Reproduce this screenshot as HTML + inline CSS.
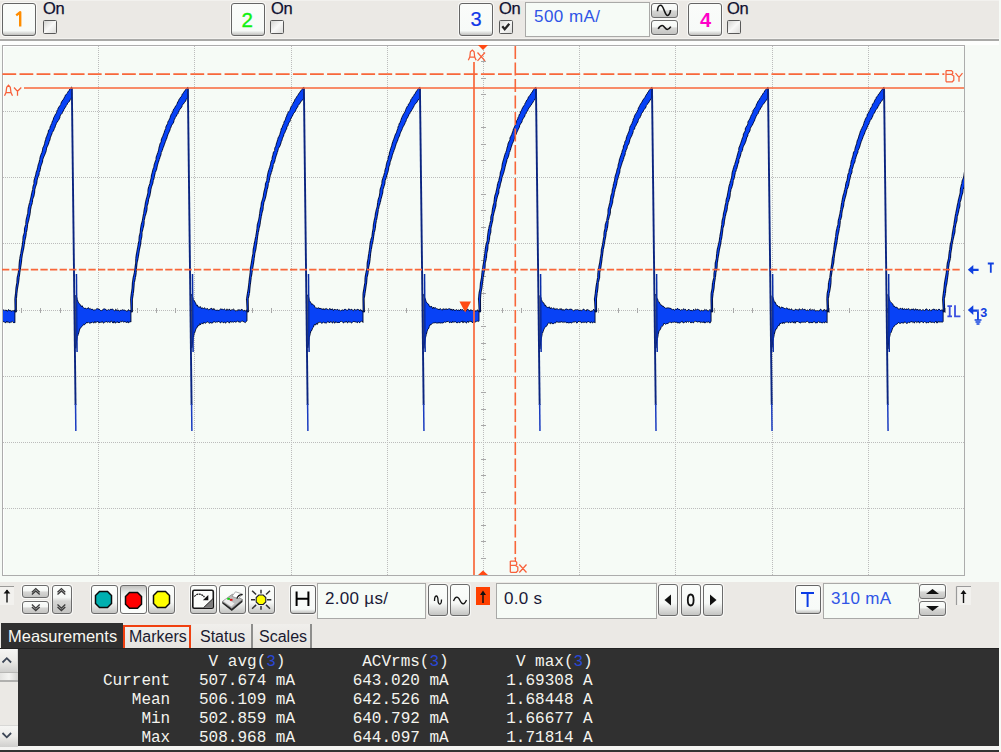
<!DOCTYPE html>
<html><head><meta charset="utf-8">
<style>
*{box-sizing:border-box}
html,body{margin:0;padding:0;width:1001px;height:752px;overflow:hidden;background:#f6faf6;font-family:"Liberation Sans",sans-serif}
.a{position:absolute}
.tb{position:absolute;left:0;width:999px;background:#ebe9e5}
.btn{position:absolute;border:1.8px solid #656565;border-radius:3px;background:linear-gradient(#fafcfa,#f7faf8 86%,#c0c0be);box-shadow:0 0 0 1px #f8f8f6}
.btn2{position:absolute;border:1.9px solid #6c6c6c;border-radius:3px;background:linear-gradient(#fbfdfb,#f5f7f5 42%,#d6d6d4 56%,#c4c4c2);box-shadow:0 0 0 1px #f8f8f6}
.btn3{position:absolute;border:1.9px solid #6c6c6c;border-radius:3px;background:linear-gradient(#fbfdfb,#f7f9f7 60%,#c4c4c2);box-shadow:0 0 0 1px #f8f8f6}
.on{position:absolute;font-size:16.5px;line-height:14.5px;color:#101030;letter-spacing:-0.3px;-webkit-text-stroke:0.25px #101030}
.cb{position:absolute;width:14px;height:14px;border:1.6px solid #585858;border-radius:1.5px;background:linear-gradient(135deg,#d2d2d0,#f8f8f7 50%,#dcdcda)}
.inp{position:absolute;border:1.5px solid #a9a9a7;background:#f6fbf6;font-size:17px;white-space:pre;line-height:20px}
.tab{position:absolute;top:624px;height:24px;background:linear-gradient(#f0efec,#e6e4df);font-size:16px;line-height:25px;color:#1a1a30;border-right:2px solid #8e8e8c}
.meas{position:absolute;left:103px;top:652.5px;font-family:"Liberation Mono",monospace;font-size:16px;line-height:19px;color:#f4f4ee;white-space:pre}
.b3{color:#2a48d8}
</style></head><body>
<!-- top toolbar -->
<div class="tb" style="top:0;height:39px"></div>
<div class="a" style="left:0;top:0;width:999px;height:1px;background:#f2f1ee"></div>
<div class="a" style="left:0;top:39px;width:999px;height:2px;background:#a9a9a7"></div>
<div class="a" style="left:0;top:38px;width:999px;height:1px;background:#f3f2ef"></div>
<div class="a" style="left:0;top:41px;width:999px;height:4px;background:#fdfefd"></div>

<div class="btn" style="left:2px;top:3px;width:34px;height:33px"></div>
<div class="on" style="left:43px;top:1px">On</div>
<div class="cb" style="left:43px;top:20px"></div>

<div class="btn" style="left:231px;top:3px;width:34px;height:33px"></div>
<div class="on" style="left:271px;top:1px">On</div>
<div class="cb" style="left:270px;top:20px"></div>

<div class="btn" style="left:459px;top:3px;width:34px;height:33px"></div>
<div class="on" style="left:499px;top:1px">On</div>
<div class="cb" style="left:499px;top:20px"></div>
<div class="inp" style="left:525px;top:2px;width:125px;height:35px;color:#2f55e6;padding:3.5px 0 0 8px;letter-spacing:0.45px">500 mA/</div>
<div class="btn2" style="left:651px;top:3px;width:27px;height:15px"></div>
<div class="btn2" style="left:651px;top:20px;width:27px;height:15px"></div>

<div class="btn" style="left:688px;top:3px;width:34px;height:33px"></div>
<div class="on" style="left:727px;top:1px">On</div>
<div class="cb" style="left:727px;top:20px"></div>

<!-- plot -->
<svg class="a" style="left:0;top:0" width="1001" height="752">
  <rect x="2.5" y="45.5" width="962" height="530" fill="#f6fbf6" stroke="#acacac" stroke-width="1"/>
  <path d="M3.5 46.5V575M3 46.5H964" stroke="#ffffff" stroke-width="1"/>
  <path d="M98.5 46V575M194.5 46V575M291.5 46V575M387.5 46V575M483.5 46V575M579.5 46V575M675.5 46V575M772.5 46V575M868.5 46V575M3 111.5H964M3 177.5H964M3 243.5H964M3 310.5H964M3 376.5H964M3 442.5H964M3 508.5H964" stroke="#bcbcbc" stroke-width="1" stroke-dasharray="1 1" fill="none"/>
  <path d="M21.5 308V313M40.5 308V313M60.5 308V313M79.5 308V313M117.5 308V313M137.5 308V313M156.5 308V313M175.5 308V313M214.5 308V313M233.5 308V313M252.5 308V313M271.5 308V313M310.5 308V313M329.5 308V313M348.5 308V313M368.5 308V313M406.5 308V313M425.5 308V313M445.5 308V313M464.5 308V313M502.5 308V313M521.5 308V313M541.5 308V313M560.5 308V313M598.5 308V313M618.5 308V313M637.5 308V313M656.5 308V313M695.5 308V313M714.5 308V313M733.5 308V313M752.5 308V313M791.5 308V313M810.5 308V313M829.5 308V313M849.5 308V313M887.5 308V313M906.5 308V313M926.5 308V313M945.5 308V313M481 61.5H486M481 78.5H486M481 94.5H486M481 127.5H486M481 144.5H486M481 160.5H486M481 194.5H486M481 210.5H486M481 227.5H486M481 260.5H486M481 276.5H486M481 293.5H486M481 326.5H486M481 343.5H486M481 359.5H486M481 392.5H486M481 409.5H486M481 425.5H486M481 459.5H486M481 475.5H486M481 492.5H486M481 525.5H486M481 541.5H486M481 558.5H486" stroke="#a8a8a8" stroke-width="1" fill="none"/>
  <defs><clipPath id="pc"><rect x="3" y="46" width="961" height="529"/></clipPath></defs>
  <g clip-path="url(#pc)">
  <g fill="#0842f6" stroke="#000a30" stroke-width="0.9" stroke-linejoin="round" shape-rendering="crispEdges">
    <path d="M-100.98 312L-101.61 298.9L-100.84 293.42L-99.89 288.06L-99.51 282.82L-98.79 277.7L-98.04 272.69L-97.63 267.79L-96.71 263L-95.94 258.32L-95.14 253.74L-94.94 249.26L-94.11 244.88L-93.57 240.6L-92.38 236.41L-91.78 232.32L-91.56 228.32L-90.22 224.4L-89.55 220.58L-89.09 216.83L-88.44 213.17L-88.08 209.6L-87.5 206.1L-86.47 202.68L-86.12 199.33L-85.36 196.06L-84.65 192.86L-84.13 189.73L-83.15 186.68L-82.5 183.69L-81.55 180.76L-81.11 177.9L-80.35 175.11L-79.79 172.37L-79.01 169.7L-78.49 167.09L-77.95 164.53L-76.78 162.03L-76.12 159.59L-75.57 157.2L-75 154.86L-74.61 152.58L-74.01 150.35L-73.32 148.16L-72.81 146.03L-71.67 143.94L-71.27 141.9L-70.3 139.9L-69.97 137.95L-68.92 136.04L-68.34 134.17L-68.28 132.35L-67.48 130.56L-66.34 128.82L-66 127.11L-65 125.44L-64.76 123.81L-64.34 122.21L-63.3 120.65L-62.55 119.13L-62.26 117.64L-61.75 116.18L-60.93 114.75L-59.85 113.36L-59.35 112L-59.16 110.66L-58.43 109.36L-57.89 108.08L-57.28 106.84L-56.12 105.62L-55.92 104.43L-55.02 103.26L-54.46 102.12L-54 101.01L-52.99 99.92L-52.78 98.85L-51.78 97.81L-51.52 96.79L-50.68 95.8L-50.19 94.82L-49.52 93.87L-48.4 92.94L-47.89 92.03L-47.61 91.14L-46.58 90.27L-46.42 89.42L-45.67 88.58L-44.72 87.77L-44.28 86.97L-44.28 97.81L-44.88 98.85L-45.82 99.92L-46.48 101.01L-47.67 102.12L-47.78 103.26L-48.73 104.43L-49.34 105.62L-50.73 106.84L-51.48 108.08L-52.16 109.36L-52.61 110.66L-53.3 112L-54.08 113.36L-54.61 114.75L-55.43 116.18L-56.56 117.64L-57.47 119.13L-57.92 120.65L-58.81 122.21L-59.7 123.81L-60.54 125.44L-61.02 127.11L-61.89 128.82L-62.82 130.56L-63.44 132.35L-63.68 134.17L-64.88 136.04L-65.39 137.95L-65.97 139.9L-66.92 141.9L-67.9 143.94L-68.75 146.03L-69.04 148.16L-70.16 150.35L-70.82 152.58L-71.35 154.86L-71.93 157.2L-73.06 159.59L-73.49 162.03L-74.55 164.53L-74.78 167.09L-76.16 169.7L-76.85 172.37L-77.36 175.11L-77.97 177.9L-78.51 180.76L-79.19 183.69L-80.45 186.68L-80.66 189.73L-81.52 192.86L-82.64 196.06L-83.32 199.33L-83.65 202.68L-84.31 206.1L-85.56 209.6L-86.27 213.17L-86.51 216.83L-87.43 220.58L-88.22 224.4L-88.6 228.32L-89.68 232.32L-90.45 236.41L-91.01 240.6L-91.97 244.88L-92.45 249.26L-93.51 253.74L-94.23 258.32L-94.78 263L-95.47 267.79L-95.87 272.69L-96.93 277.7L-97.67 282.82L-97.83 288.06L-99.16 293.42L-99.48 298.9L-99.58 312ZM-40.28 294.47L-39.48 296.52L-38.68 300.01L-37.88 301.73L-37.08 303.27L-36.28 303.5L-35.48 305.61L-34.68 305.38L-33.88 306.97L-33.08 307L-32.28 307.36L-31.48 306.67L-30.68 308.89L-29.88 308.59L-29.08 308.81L-28.28 308.37L-27.48 307.77L-26.68 307.79L-25.88 308.84L-25.08 309.39L-24.28 309.29L-23.48 308.61L-22.68 308.77L-21.88 308.61L-21.08 310.14L-20.28 309.21L-19.48 309.01L-18.68 308.77L-17.88 310.08L-17.08 310.27L-16.28 309.68L-15.48 308.77L-14.68 310.27L-13.88 310.03L-13.08 309.15L-12.28 309.54L-11.48 309.07L-10.68 309.96L-9.88 309.33L-9.08 310.75L-8.28 308.87L-7.48 310.57L-6.68 310.25L-5.88 309.43L-5.08 308.85L-4.28 309.79L-3.48 310.6L-2.68 309.17L-1.88 310.22L-1.08 310.25L-0.28 310.64L0.52 310.41L1.32 309.99L2.12 309.04L2.92 310.54L3.72 309.63L4.52 310.55L5.32 310.4L6.12 309.96L6.92 311.06L7.72 311.14L8.52 309.47L9.32 310.54L10.12 310.04L10.92 311.12L11.72 311.28L12.52 310.68L13.32 310.85L14.12 310.71L14.92 309.83L14.92 322.8L14.12 322.42L13.32 322.64L12.52 321.36L11.72 321.91L10.92 322.62L10.12 322.15L9.32 322.88L8.52 321.93L7.72 322.5L6.92 321.17L6.12 322.66L5.32 322.6L4.52 322.11L3.72 321.75L2.92 321.41L2.12 322.04L1.32 321.43L0.52 321.48L-0.28 323.08L-1.08 322.45L-1.88 322.02L-2.68 321.19L-3.48 321.6L-4.28 321.16L-5.08 321.41L-5.88 322.79L-6.68 322.34L-7.48 321.23L-8.28 321.22L-9.08 322.12L-9.88 322.94L-10.68 322.22L-11.48 322.06L-12.28 321.78L-13.08 321.57L-13.88 323.21L-14.68 323.01L-15.48 322.28L-16.28 321.91L-17.08 322.07L-17.88 323.19L-18.68 322.19L-19.48 322.7L-20.28 323.19L-21.08 322.72L-21.88 321.71L-22.68 322.81L-23.48 321.44L-24.28 323.39L-25.08 322.54L-25.88 322.04L-26.68 322.9L-27.48 323.3L-28.28 323.61L-29.08 323.22L-29.88 323.02L-30.68 324.3L-31.48 324.13L-32.28 324.5L-33.08 324.58L-33.88 325.71L-34.68 327.12L-35.48 328.53L-36.28 329.75L-37.08 332.34L-37.88 334.63L-38.68 338.63L-39.48 342.55L-40.28 349.6ZM15.05 312L14.79 298.9L15.48 293.42L15.87 288.06L16.75 282.82L17.11 277.7L18.22 272.69L18.87 267.79L19.2 263L19.71 258.32L20.65 253.74L21.41 249.26L22.25 244.88L22.74 240.6L23.1 236.41L24.33 232.32L24.49 228.32L25.69 224.4L25.93 220.58L26.72 216.83L27.71 213.17L27.94 209.6L28.62 206.1L29.55 202.68L30.37 199.33L31.13 196.06L31.69 192.86L32.55 189.73L32.9 186.68L33.89 183.69L33.95 180.76L34.72 177.9L35.6 175.11L36.1 172.37L37.07 169.7L37.67 167.09L38.25 164.53L39.14 162.03L39.61 159.59L40.09 157.2L40.8 154.86L41.79 152.58L42.48 150.35L42.66 148.16L43.77 146.03L44.5 143.94L44.85 141.9L45.54 139.9L45.93 137.95L46.82 136.04L47.45 134.17L48.17 132.35L48.42 130.56L49.73 128.82L50.06 127.11L50.63 125.44L51.56 123.81L52.04 122.21L52.63 120.65L53.42 119.13L53.63 117.64L54.6 116.18L55.16 114.75L56.18 113.36L56.8 112L56.98 110.66L57.76 109.36L58.16 108.08L59.01 106.84L59.92 105.62L60.62 104.43L60.96 103.26L61.48 102.12L62.03 101.01L62.96 99.92L63.81 98.85L63.89 97.81L64.97 96.79L65.08 95.8L65.83 94.82L66.48 93.87L67.43 92.94L67.8 92.03L68.46 91.14L69.27 90.27L69.53 89.42L70.6 88.58L70.8 87.77L71.75 86.97L71.75 97.81L70.96 98.85L70 99.92L69.7 101.01L68.83 102.12L67.59 103.26L67.23 104.43L66.35 105.62L65.65 106.84L64.85 108.08L64 109.36L63.54 110.66L62.57 112L62.16 113.36L60.78 114.75L60.04 116.18L59.87 117.64L59.16 119.13L58.3 120.65L57.1 122.21L56.33 123.81L55.56 125.44L55.1 127.11L54.31 128.82L53.59 130.56L52.48 132.35L51.78 134.17L51.01 136.04L50.34 137.95L49.94 139.9L49.07 141.9L48.5 143.94L47.58 146.03L46.57 148.16L46.42 150.35L45.64 152.58L44.74 154.86L43.67 157.2L42.8 159.59L42.53 162.03L41.59 164.53L40.66 167.09L40.39 169.7L39.4 172.37L38.95 175.11L37.71 177.9L37.09 180.76L36.68 183.69L35.61 186.68L34.81 189.73L34.61 192.86L33.96 196.06L32.69 199.33L32.45 202.68L31.3 206.1L30.58 209.6L30.27 213.17L29.48 216.83L28.71 220.58L27.64 224.4L27.35 228.32L26.46 232.32L25.92 236.41L24.97 240.6L24.34 244.88L23.62 249.26L22.6 253.74L21.86 258.32L21.41 263L20.62 267.79L19.88 272.69L19.22 277.7L18.58 282.82L17.64 288.06L16.98 293.42L16.46 298.9L16.45 312ZM75.75 295.35L76.55 296.77L77.35 299.54L78.15 302.06L78.95 303.08L79.75 304.09L80.55 304.98L81.35 306.57L82.15 305.7L82.95 307.26L83.75 307.85L84.55 308.38L85.35 308.26L86.15 308.67L86.95 308.79L87.75 308.17L88.55 307.62L89.35 309.06L90.15 308.32L90.95 309.32L91.75 309.39L92.55 309.19L93.35 310.23L94.15 309.66L94.95 310.29L95.75 309.57L96.55 308.86L97.35 308.46L98.15 309.18L98.95 308.95L99.75 309.61L100.55 310.51L101.35 310.6L102.15 310.24L102.95 309.82L103.75 308.69L104.55 308.95L105.35 309L106.15 309.95L106.95 310.68L107.75 309.82L108.55 309.51L109.35 310.14L110.15 309.38L110.95 309.43L111.75 309.35L112.55 309.18L113.35 309.7L114.15 310.47L114.95 311L115.75 309.1L116.55 309.87L117.35 311.04L118.15 310.12L118.95 310.56L119.75 311.12L120.55 310.35L121.35 310.42L122.15 309.56L122.95 310.26L123.75 310.11L124.55 310.16L125.35 310.45L126.15 310.88L126.95 311.36L127.75 310.83L128.55 309.55L129.35 310.99L130.15 310.12L130.95 310.82L130.95 322.09L130.15 321.48L129.35 322.24L128.55 322.81L127.75 321.44L126.95 322.95L126.15 322.07L125.35 321.85L124.55 321.53L123.75 322.39L122.95 321.25L122.15 321.11L121.35 321.97L120.55 321.26L119.75 322.74L118.95 322.02L118.15 323.01L117.35 321.56L116.55 322.06L115.75 322.97L114.95 323.06L114.15 321.19L113.35 322.98L112.55 322.69L111.75 321.2L110.95 321.15L110.15 322.63L109.35 322.32L108.55 321.75L107.75 322.41L106.95 322.05L106.15 321.3L105.35 322.22L104.55 322.18L103.75 323.15L102.95 322.8L102.15 321.38L101.35 322.57L100.55 322.43L99.75 322.32L98.95 323.16L98.15 321.48L97.35 321.7L96.55 322.14L95.75 322.87L94.95 321.38L94.15 322.96L93.35 322.73L92.55 322.23L91.75 322.65L90.95 322.21L90.15 323.54L89.35 322.94L88.55 322.47L87.75 322.83L86.95 322.15L86.15 323.05L85.35 324.07L84.55 324.64L83.75 324.07L82.95 325.41L82.15 326.42L81.35 327.15L80.55 327.76L79.75 329.16L78.95 332.22L78.15 334.84L77.35 336.77L76.55 341.75L75.75 348.35ZM131.08 312L130.54 298.9L131.27 293.42L132.05 288.06L132.35 282.82L133.09 277.7L134.29 272.69L134.94 267.79L135.61 263L135.71 258.32L136.41 253.74L137.25 249.26L138.04 244.88L138.86 240.6L139.18 236.41L140.17 232.32L140.53 228.32L141.22 224.4L142.31 220.58L142.9 216.83L143.63 213.17L144.13 209.6L144.88 206.1L145.37 202.68L146.14 199.33L147.09 196.06L147.83 192.86L147.97 189.73L148.67 186.68L149.82 183.69L150.36 180.76L151.13 177.9L151.41 175.11L152.22 172.37L152.77 169.7L153.82 167.09L154.18 164.53L155.04 162.03L155.94 159.59L156.13 157.2L156.95 154.86L157.75 152.58L158.53 150.35L158.84 148.16L159.46 146.03L159.92 143.94L161.12 141.9L161.22 139.9L161.88 137.95L162.87 136.04L163.47 134.17L164.26 132.35L164.64 130.56L165.62 128.82L165.78 127.11L166.53 125.44L167.49 123.81L167.73 122.21L168.53 120.65L169.47 119.13L170.09 117.64L170.45 116.18L171 114.75L171.79 113.36L172.69 112L173.08 110.66L173.54 109.36L174.6 108.08L175.14 106.84L176.02 105.62L176.67 104.43L177.29 103.26L177.6 102.12L178.49 101.01L178.77 99.92L179.41 98.85L180.11 97.81L181.11 96.79L181.72 95.8L181.89 94.82L182.6 93.87L183.24 92.94L183.86 92.03L184.51 91.14L185.14 90.27L185.63 89.42L186.51 88.58L187.3 87.77L187.78 86.97L187.78 97.81L186.74 98.85L185.93 99.92L185.77 101.01L184.78 102.12L183.93 103.26L182.89 104.43L182.21 105.62L181.86 106.84L181.01 108.08L179.88 109.36L179.25 110.66L178.32 112L178.2 113.36L176.97 114.75L176.3 116.18L175.39 117.64L174.61 119.13L174 120.65L173.68 122.21L172.75 123.81L171.58 125.44L171.03 127.11L170.28 128.82L169.79 130.56L168.98 132.35L168.1 134.17L167.43 136.04L166.91 137.95L166.12 139.9L165.33 141.9L164.57 143.94L163.86 146.03L162.98 148.16L162.35 150.35L161.32 152.58L160.93 154.86L160.05 157.2L159.32 159.59L158.45 162.03L157.69 164.53L157.08 167.09L156.55 169.7L155.37 172.37L154.68 175.11L154.2 177.9L153.3 180.76L152.74 183.69L151.63 186.68L150.92 189.73L150.47 192.86L149.81 196.06L148.66 199.33L148.28 202.68L147.17 206.1L147.02 209.6L146.18 213.17L145 216.83L144.28 220.58L144.06 224.4L143.17 228.32L142.11 232.32L141.91 236.41L141.09 240.6L140.6 244.88L139.6 249.26L138.87 253.74L138.14 258.32L137.08 263L136.56 267.79L136.27 272.69L135.48 277.7L134.36 282.82L133.93 288.06L133.42 293.42L132.51 298.9L132.48 312ZM191.78 294.19L192.58 296.86L193.38 299.71L194.18 300.57L194.98 301.96L195.78 303.42L196.58 305.44L197.38 305.06L198.18 307.08L198.98 306.84L199.78 307.15L200.58 306.61L201.38 308.49L202.18 308.17L202.98 307.85L203.78 308.83L204.58 307.62L205.38 308.5L206.18 309.33L206.98 308.25L207.78 308.68L208.58 309.9L209.38 309.47L210.18 308.75L210.98 308.55L211.78 308.28L212.58 310.1L213.38 308.53L214.18 309.9L214.98 309.43L215.78 310.46L216.58 310.28L217.38 310.17L218.18 310.46L218.98 310.3L219.78 309.73L220.58 308.95L221.38 309.3L222.18 308.83L222.98 309.67L223.78 309.47L224.58 308.96L225.38 309.73L226.18 310.53L226.98 308.83L227.78 310.32L228.58 310.04L229.38 308.9L230.18 310.58L230.98 310.22L231.78 309.74L232.58 309.6L233.38 309.82L234.18 309.56L234.98 310.58L235.78 311.05L236.58 310.61L237.38 310.85L238.18 309.43L238.98 310.58L239.78 309.56L240.58 310.96L241.38 309.41L242.18 309.58L242.98 310.12L243.78 311.23L244.58 310.39L245.38 310.95L246.18 310.17L246.98 310.25L246.98 320.94L246.18 321.61L245.38 322.65L244.58 322.29L243.78 321.84L242.98 321.1L242.18 321.22L241.38 321.44L240.58 322.22L239.78 321.83L238.98 322.48L238.18 321.2L237.38 321.2L236.58 321.71L235.78 322.21L234.98 321.73L234.18 321.46L233.38 322.45L232.58 321.77L231.78 322.2L230.98 321.69L230.18 321.52L229.38 323.18L228.58 322.07L227.78 321.61L226.98 321.91L226.18 322.5L225.38 323.17L224.58 321.98L223.78 322.6L222.98 322.67L222.18 321.82L221.38 321.84L220.58 322.94L219.78 322.3L218.98 321.65L218.18 321.41L217.38 322.11L216.58 321.88L215.78 322.48L214.98 322.25L214.18 321.48L213.38 321.85L212.58 323.03L211.78 323.04L210.98 322.95L210.18 322.48L209.38 323.47L208.58 322.5L207.78 322L206.98 321.83L206.18 322.83L205.38 323.31L204.58 322.72L203.78 322.35L202.98 324.08L202.18 323.28L201.38 323.26L200.58 324.78L199.78 323.68L198.98 325.79L198.18 325.23L197.38 327.32L196.58 327.7L195.78 329.46L194.98 332L194.18 333.75L193.38 337.21L192.58 342.91L191.78 347.96ZM247.11 312L246.44 298.9L247.35 293.42L248.24 288.06L248.8 282.82L249.41 277.7L250.06 272.69L250.34 267.79L251.25 263L251.95 258.32L252.85 253.74L253.16 249.26L254.04 244.88L254.81 240.6L255.69 236.41L256.4 232.32L256.93 228.32L257.3 224.4L258.4 220.58L259.18 216.83L259.61 213.17L260.15 209.6L260.93 206.1L261.35 202.68L262.43 199.33L263.29 196.06L263.63 192.86L264.44 189.73L265.2 186.68L265.42 183.69L266.61 180.76L267.06 177.9L267.43 175.11L268.01 172.37L268.79 169.7L269.69 167.09L270.44 164.53L270.84 162.03L271.92 159.59L272.19 157.2L272.92 154.86L273.34 152.58L274.6 150.35L274.67 148.16L275.86 146.03L276.27 143.94L276.93 141.9L277.59 139.9L278.04 137.95L279.14 136.04L279.85 134.17L280.38 132.35L280.88 130.56L281.2 128.82L282.34 127.11L282.61 125.44L283.68 123.81L283.87 122.21L284.75 120.65L285.58 119.13L285.77 117.64L286.67 116.18L286.98 114.75L287.59 113.36L288.34 112L289.54 110.66L290.15 109.36L290.59 108.08L290.99 106.84L291.88 105.62L292.56 104.43L292.95 103.26L293.73 102.12L294.52 101.01L294.6 99.92L295.36 98.85L296.18 97.81L296.59 96.79L297.39 95.8L298.15 94.82L298.5 93.87L299.37 92.94L299.82 92.03L300.66 91.14L301.13 90.27L301.97 89.42L302.17 88.58L303.24 87.77L303.81 86.97L303.81 97.81L303.38 98.85L302.59 99.92L301.51 101.01L300.62 102.12L300.27 103.26L298.9 104.43L298.14 105.62L297.76 106.84L296.84 108.08L296.11 109.36L295.64 110.66L294.94 112L293.59 113.36L293.02 114.75L292.25 116.18L291.45 117.64L290.53 119.13L290.44 120.65L289.39 122.21L288.35 123.81L288.07 125.44L286.83 127.11L286.64 128.82L285.66 130.56L285.03 132.35L283.92 134.17L283.58 136.04L282.56 137.95L282.13 139.9L281.24 141.9L280.71 143.94L279.93 146.03L278.6 148.16L277.97 150.35L277.34 152.58L276.54 154.86L275.75 157.2L275.21 159.59L274.59 162.03L273.41 164.53L272.91 167.09L272.25 169.7L271.48 172.37L270.52 175.11L269.75 177.9L269.38 180.76L268.45 183.69L268.03 186.68L267.19 189.73L266.56 192.86L265.95 196.06L265.1 199.33L263.91 202.68L263.37 206.1L263.05 209.6L262 213.17L261.34 216.83L260.62 220.58L260.17 224.4L259.21 228.32L258.4 232.32L257.67 236.41L257.26 240.6L256.54 244.88L255.93 249.26L254.86 253.74L254.34 258.32L253.63 263L252.87 267.79L252.12 272.69L251.26 277.7L250.6 282.82L249.98 288.06L249.53 293.42L248.26 298.9L248.51 312ZM307.81 294.79L308.61 296.98L309.41 300.34L310.21 301.95L311.01 302.59L311.81 304.61L312.61 304.15L313.41 304.91L314.21 305.26L315.01 307.22L315.81 308.03L316.61 308L317.41 308.27L318.21 307.99L319.01 307.74L319.81 308.94L320.61 307.98L321.41 309.12L322.21 308.61L323.01 309.78L323.81 308.48L324.61 310.02L325.41 308.71L326.21 308.38L327.01 309.16L327.81 309.39L328.61 309.58L329.41 308.88L330.21 308.57L331.01 310.01L331.81 309.04L332.61 308.87L333.41 310.59L334.21 309.51L335.01 309.37L335.81 309.64L336.61 309.78L337.41 309.4L338.21 310.31L339.01 309.75L339.81 310.15L340.61 310.74L341.41 310.4L342.21 310.06L343.01 309.73L343.81 310.48L344.61 309.35L345.41 309.34L346.21 309.95L347.01 310.18L347.81 310.15L348.61 309.35L349.41 309.03L350.21 309.93L351.01 309.59L351.81 309.22L352.61 310.28L353.41 310.77L354.21 309.44L355.01 309.24L355.81 310.48L356.61 309.76L357.41 309.41L358.21 309.61L359.01 309.61L359.81 311.04L360.61 309.44L361.41 310.1L362.21 311.4L363.01 310.41L363.01 322.5L362.21 321L361.41 321.38L360.61 321.79L359.81 322.59L359.01 322.4L358.21 321.49L357.41 322.69L356.61 322.21L355.81 322.09L355.01 321.65L354.21 321.65L353.41 321.51L352.61 322.16L351.81 322.93L351.01 322.71L350.21 321.97L349.41 322.09L348.61 321.38L347.81 322.9L347.01 322.58L346.21 321.16L345.41 322.31L344.61 322.13L343.81 322.77L343.01 322.74L342.21 321.62L341.41 321.49L340.61 321.51L339.81 322.25L339.01 322.94L338.21 322.26L337.41 322.57L336.61 322.55L335.81 321.58L335.01 323.16L334.21 322.8L333.41 321.3L332.61 323.12L331.81 322.4L331.01 321.78L330.21 321.87L329.41 322.97L328.61 321.9L327.81 321.41L327.01 322.45L326.21 323.42L325.41 322.73L324.61 322.82L323.81 322.09L323.01 322.74L322.21 322.95L321.41 323.29L320.61 322.22L319.81 322.26L319.01 322.65L318.21 322.37L317.41 324.43L316.61 323.07L315.81 325.05L315.01 324.44L314.21 324.73L313.41 327.31L312.61 328.03L311.81 330.4L311.01 330.77L310.21 333.9L309.41 337.15L308.61 343.34L307.81 347.93ZM363.14 312L362.88 298.9L362.99 293.42L363.9 288.06L364.8 282.82L365 277.7L365.84 272.69L366.98 267.79L367.15 263L368.02 258.32L368.64 253.74L369.41 249.26L369.85 244.88L370.51 240.6L371.87 236.41L372.39 232.32L373.05 228.32L373.38 224.4L374.07 220.58L374.96 216.83L375.42 213.17L376.25 209.6L377.26 206.1L377.54 202.68L378.19 199.33L379.32 196.06L379.73 192.86L380 189.73L380.93 186.68L381.77 183.69L382.02 180.76L382.89 177.9L383.8 175.11L384.59 172.37L385.06 169.7L385.94 167.09L386.3 164.53L386.92 162.03L387.89 159.59L388.23 157.2L389.17 154.86L389.44 152.58L390.19 150.35L390.73 148.16L391.64 146.03L392.03 143.94L392.71 141.9L393.38 139.9L394.21 137.95L394.75 136.04L395.5 134.17L396.53 132.35L396.96 130.56L397.74 128.82L397.93 127.11L398.71 125.44L399.14 123.81L400.22 122.21L400.63 120.65L401.22 119.13L401.68 117.64L402.44 116.18L403.14 114.75L403.87 113.36L404.89 112L405.38 110.66L405.71 109.36L406.41 108.08L406.91 106.84L408.09 105.62L408.33 104.43L409.25 103.26L409.86 102.12L410.62 101.01L410.63 99.92L411.48 98.85L412.15 97.81L412.58 96.79L413.77 95.8L414.01 94.82L414.95 93.87L415.4 92.94L415.71 92.03L416.57 91.14L417.09 90.27L417.58 89.42L418.28 88.58L419.22 87.77L419.84 86.97L419.84 97.81L419.2 98.85L418.14 99.92L417.59 101.01L417.06 102.12L415.91 103.26L414.92 104.43L414.32 105.62L413.61 106.84L412.95 108.08L412.27 109.36L411.44 110.66L410.38 112L409.86 113.36L408.87 114.75L408.32 116.18L407.58 117.64L406.57 119.13L406.29 120.65L405.43 122.21L404.79 123.81L403.95 125.44L402.9 127.11L402.34 128.82L401.53 130.56L400.61 132.35L399.96 134.17L399.51 136.04L398.42 137.95L397.89 139.9L397.09 141.9L396.17 143.94L395.52 146.03L394.93 148.16L394.07 150.35L393.36 152.58L392.4 154.86L391.89 157.2L391.18 159.59L390.2 162.03L389.84 164.53L388.83 167.09L388.54 169.7L387.86 172.37L386.93 175.11L386.21 177.9L385.15 180.76L384.91 183.69L384.01 186.68L383.02 189.73L382.76 192.86L381.92 196.06L381.02 199.33L380.34 202.68L379.19 206.1L378.48 209.6L377.88 213.17L377.25 216.83L376.49 220.58L375.72 224.4L375.45 228.32L374.4 232.32L373.69 236.41L373.19 240.6L372.17 244.88L371.41 249.26L370.65 253.74L370.31 258.32L369.64 263L368.6 267.79L368.21 272.69L367.1 277.7L366.68 282.82L365.89 288.06L365.11 293.42L364.21 298.9L364.54 312ZM423.84 294.19L424.64 297.65L425.44 299.22L426.24 302.16L427.04 302.92L427.84 303.63L428.64 304.3L429.44 306.36L430.24 307.07L431.04 305.98L431.84 306.78L432.64 308.55L433.44 307.21L434.24 308.49L435.04 307.27L435.84 308.27L436.64 308.63L437.44 308.87L438.24 309.01L439.04 309.96L439.84 308.73L440.64 308.73L441.44 309.59L442.24 310.21L443.04 308.57L443.84 309.31L444.64 309.1L445.44 309.93L446.24 308.89L447.04 309.11L447.84 309.53L448.64 308.62L449.44 308.73L450.24 308.78L451.04 310.19L451.84 308.93L452.64 310.44L453.44 309.17L454.24 310.34L455.04 310.19L455.84 310.22L456.64 309.44L457.44 310.53L458.24 309.98L459.04 310.29L459.84 310.58L460.64 309.12L461.44 310.28L462.24 309.29L463.04 310.15L463.84 310.99L464.64 310.41L465.44 310.32L466.24 310.98L467.04 309.14L467.84 309.31L468.64 309.69L469.44 311.2L470.24 309.83L471.04 310.29L471.84 309.96L472.64 310.88L473.44 309.82L474.24 310.54L475.04 311.33L475.84 310.75L476.64 311L477.44 309.71L478.24 311.32L479.04 310.41L479.04 321.16L478.24 321.44L477.44 321.15L476.64 321.24L475.84 322.09L475.04 321.77L474.24 322.56L473.44 321.79L472.64 322.74L471.84 321.63L471.04 322.01L470.24 321.06L469.44 321.26L468.64 322.55L467.84 321.12L467.04 322.53L466.24 323.12L465.44 321.89L464.64 321.94L463.84 321.35L463.04 323.05L462.24 321.12L461.44 321.58L460.64 321.9L459.84 322.8L459.04 322.43L458.24 322.01L457.44 322.88L456.64 322.74L455.84 321.84L455.04 321.69L454.24 322L453.44 322.25L452.64 321.3L451.84 323.02L451.04 322.22L450.24 322.17L449.44 322.71L448.64 321.38L447.84 321.51L447.04 321.63L446.24 321.8L445.44 322.41L444.64 321.9L443.84 322.5L443.04 322.64L442.24 323.09L441.44 322.83L440.64 322.92L439.84 323.31L439.04 322.2L438.24 323.3L437.44 322.94L436.64 323.09L435.84 322.35L435.04 323.14L434.24 322.69L433.44 322.94L432.64 323.1L431.84 323.98L431.04 324.85L430.24 324.59L429.44 326.26L428.64 328.44L427.84 329.18L427.04 331.72L426.24 334.78L425.44 337.95L424.64 343.41L423.84 348.49ZM479.17 312L478.45 298.9L478.93 293.42L480.01 288.06L480.41 282.82L481.44 277.7L481.89 272.69L482.55 267.79L483.42 263L484.03 258.32L484.64 253.74L485.18 249.26L485.88 244.88L487.14 240.6L487.42 236.41L487.94 232.32L488.69 228.32L489.58 224.4L490.62 220.58L490.75 216.83L491.89 213.17L492.3 209.6L492.93 206.1L493.88 202.68L494.26 199.33L494.7 196.06L495.72 192.86L496.46 189.73L497.11 186.68L497.54 183.69L498.67 180.76L499.29 177.9L500.04 175.11L500.32 172.37L501.26 169.7L501.85 167.09L502.13 164.53L502.69 162.03L503.45 159.59L504.08 157.2L504.71 154.86L505.57 152.58L506.5 150.35L506.85 148.16L507.65 146.03L507.95 143.94L508.75 141.9L509.93 139.9L509.92 137.95L510.93 136.04L511.78 134.17L512.42 132.35L513.03 130.56L513.45 128.82L514.38 127.11L515.05 125.44L515.65 123.81L516.45 122.21L516.48 120.65L517.72 119.13L517.98 117.64L518.84 116.18L519.16 114.75L520.27 113.36L520.29 112L521.32 110.66L521.71 109.36L522.46 108.08L523.09 106.84L523.93 105.62L524.67 104.43L525 103.26L525.83 102.12L526.26 101.01L526.84 99.92L527.92 98.85L528.14 97.81L528.61 96.79L529.41 95.8L530.33 94.82L530.59 93.87L531.59 92.94L532.08 92.03L532.8 91.14L533.08 90.27L533.65 89.42L534.31 88.58L535.08 87.77L535.87 86.97L535.87 97.81L534.8 98.85L534.69 99.92L533.58 101.01L533.02 102.12L532.28 103.26L531.59 104.43L530.63 105.62L530 106.84L528.81 108.08L528.23 109.36L527.82 110.66L526.46 112L526.22 113.36L525.13 114.75L524.79 116.18L523.86 117.64L522.8 119.13L522.35 120.65L521.77 122.21L520.65 123.81L519.68 125.44L519.47 127.11L518.49 128.82L517.74 130.56L516.88 132.35L516.26 134.17L515.1 136.04L514.69 137.95L513.98 139.9L513.26 141.9L512.25 143.94L511.62 146.03L510.9 148.16L510.33 150.35L509.44 152.58L508.87 154.86L508.23 157.2L506.99 159.59L506.57 162.03L505.78 164.53L505.14 167.09L504.56 169.7L503.85 172.37L502.92 175.11L501.91 177.9L501.48 180.76L500.56 183.69L500.01 186.68L498.94 189.73L498.8 192.86L497.63 196.06L496.78 199.33L496.15 202.68L495.87 206.1L494.95 209.6L493.95 213.17L493.16 216.83L492.81 220.58L491.88 224.4L491.03 228.32L490.83 232.32L489.74 236.41L489.41 240.6L488.08 244.88L487.82 249.26L486.81 253.74L486.49 258.32L485.3 263L485.12 267.79L484.12 272.69L483.26 277.7L482.61 282.82L481.98 288.06L480.93 293.42L480.52 298.9L480.57 312ZM539.87 295.63L540.67 296.89L541.47 299.41L542.27 302L543.07 302.19L543.87 302.92L544.67 305.37L545.47 305.02L546.27 306.95L547.07 306.85L547.87 307.81L548.67 307.27L549.47 306.88L550.27 308.87L551.07 307.52L551.87 308.26L552.67 308.89L553.47 307.87L554.27 308.27L555.07 309.76L555.87 308.42L556.67 308.98L557.47 308.85L558.27 309.51L559.07 309.5L559.87 308.66L560.67 309.78L561.47 308.63L562.27 310.37L563.07 309.17L563.87 310.54L564.67 310.03L565.47 309.16L566.27 308.85L567.07 309.46L567.87 309.45L568.67 309.68L569.47 309.37L570.27 309.16L571.07 309.29L571.87 309.32L572.67 310.16L573.47 310.72L574.27 310.35L575.07 309.75L575.87 309.71L576.67 309.78L577.47 309.49L578.27 310.31L579.07 309.79L579.87 310.83L580.67 309.85L581.47 310.72L582.27 310.26L583.07 309.25L583.87 309.25L584.67 309.87L585.47 310.51L586.27 311.02L587.07 309.2L587.87 310.16L588.67 310.18L589.47 310.63L590.27 311.28L591.07 311.35L591.87 311.03L592.67 310.79L593.47 309.48L594.27 310.2L595.07 309.84L595.07 322.98L594.27 322.29L593.47 321.89L592.67 323.03L591.87 322.31L591.07 321.78L590.27 323.01L589.47 322.24L588.67 321.64L587.87 321.74L587.07 322.32L586.27 322.99L585.47 321.73L584.67 322.54L583.87 321.79L583.07 322.92L582.27 322.19L581.47 322.84L580.67 321.78L579.87 321.6L579.07 321.36L578.27 321.6L577.47 322.55L576.67 323.11L575.87 321.7L575.07 321.26L574.27 322.39L573.47 321.95L572.67 322.1L571.87 322.95L571.07 323L570.27 322.39L569.47 322.66L568.67 323.17L567.87 322.16L567.07 322.93L566.27 322.55L565.47 322.09L564.67 322L563.87 322.7L563.07 321.67L562.27 322.55L561.47 321.53L560.67 322.28L559.87 321.59L559.07 322.8L558.27 321.94L557.47 322.05L556.67 321.45L555.87 322.86L555.07 323.03L554.27 322.88L553.47 323.71L552.67 323.62L551.87 323.63L551.07 322.38L550.27 323.95L549.47 323.18L548.67 323L547.87 323.54L547.07 325.68L546.27 326.13L545.47 327.14L544.67 327.73L543.87 329.48L543.07 331.77L542.27 333.57L541.47 337.86L540.67 343.1L539.87 348.99ZM595.2 312L594.4 298.9L595.21 293.42L595.75 288.06L596.62 282.82L597.55 277.7L597.79 272.69L598.54 267.79L599.57 263L600.24 258.32L601.01 253.74L601.35 249.26L602.43 244.88L603.06 240.6L603.77 236.41L604 232.32L604.92 228.32L605.29 224.4L606.56 220.58L607.3 216.83L607.94 213.17L608.01 209.6L608.91 206.1L609.72 202.68L610.39 199.33L610.77 196.06L611.91 192.86L612.24 189.73L613.06 186.68L613.46 183.69L614.44 180.76L614.8 177.9L615.44 175.11L616.4 172.37L616.92 169.7L617.92 167.09L618.21 164.53L618.99 162.03L619.4 159.59L620.18 157.2L621 154.86L621.74 152.58L622.33 150.35L623.26 148.16L623.39 146.03L624.57 143.94L624.74 141.9L625.97 139.9L626.31 137.95L626.88 136.04L627.68 134.17L628.5 132.35L629.22 130.56L629.49 128.82L629.86 127.11L630.61 125.44L631.72 123.81L632.31 122.21L632.94 120.65L633.19 119.13L634.1 117.64L634.39 116.18L635.09 114.75L635.87 113.36L636.98 112L637.39 110.66L638.18 109.36L638.25 108.08L639.15 106.84L639.55 105.62L640.32 104.43L640.85 103.26L642.05 102.12L642.27 101.01L643.02 99.92L643.77 98.85L644.57 97.81L645.24 96.79L645.61 95.8L646.19 94.82L647.1 93.87L647.38 92.94L647.94 92.03L648.87 91.14L649.16 90.27L649.87 89.42L650.54 88.58L651.2 87.77L651.9 86.97L651.9 97.81L651.09 98.85L650.33 99.92L649.52 101.01L649.02 102.12L648.04 103.26L647.51 104.43L646.25 105.62L646.08 106.84L645.37 108.08L644.39 109.36L643.45 110.66L642.91 112L641.64 113.36L641.29 114.75L640.65 116.18L640.02 117.64L638.63 119.13L638.31 120.65L637.76 122.21L636.74 123.81L636.04 125.44L634.88 127.11L634.64 128.82L633.39 130.56L633.05 132.35L632.41 134.17L631.68 136.04L630.58 137.95L629.84 139.9L629.45 141.9L628.81 143.94L627.44 146.03L627.11 148.16L626.1 150.35L625.44 152.58L625.02 154.86L623.97 157.2L623.49 159.59L622.39 162.03L621.64 164.53L620.79 167.09L620.03 169.7L619.78 172.37L618.88 175.11L618.14 177.9L617.28 180.76L616.74 183.69L616.02 186.68L615.08 189.73L614.4 192.86L613.83 196.06L612.94 199.33L612.63 202.68L611.65 206.1L610.51 209.6L610.46 213.17L609.35 216.83L608.35 220.58L607.97 224.4L607.43 228.32L606.35 232.32L605.81 236.41L604.97 240.6L604.3 244.88L603.39 249.26L602.77 253.74L602.18 258.32L601.57 263L600.85 267.79L599.81 272.69L599.65 277.7L598.39 282.82L597.97 288.06L597.25 293.42L596.5 298.9L596.6 312ZM655.9 294.05L656.7 297.9L657.5 298.7L658.3 301.58L659.1 301.84L659.9 303.42L660.7 304.9L661.5 304.95L662.3 306.28L663.1 305.95L663.9 307.13L664.7 307.41L665.5 308.22L666.3 308.1L667.1 308.09L667.9 307.67L668.7 307.95L669.5 308.15L670.3 308.17L671.1 309.17L671.9 308.82L672.7 309.84L673.5 309.36L674.3 310.25L675.1 309.7L675.9 308.83L676.7 309.53L677.5 308.49L678.3 309.18L679.1 309.33L679.9 309.63L680.7 310.39L681.5 309.53L682.3 310.12L683.1 309.21L683.9 308.66L684.7 309.81L685.5 309.34L686.3 310.66L687.1 310.38L687.9 310.36L688.7 309.16L689.5 310.04L690.3 310.39L691.1 310.7L691.9 310.28L692.7 310.85L693.5 309.49L694.3 310.43L695.1 309.45L695.9 310.08L696.7 309.59L697.5 309.27L698.3 309.59L699.1 309.62L699.9 310.9L700.7 310.89L701.5 310.39L702.3 310.67L703.1 310.54L703.9 310.81L704.7 309.32L705.5 309.99L706.3 309.74L707.1 310.05L707.9 311.27L708.7 310.5L709.5 309.83L710.3 309.59L711.1 310.76L711.1 321.06L710.3 322.89L709.5 322.92L708.7 321.66L707.9 322L707.1 322.48L706.3 321.91L705.5 322.62L704.7 322.94L703.9 321.53L703.1 322.92L702.3 322.12L701.5 322.15L700.7 322.81L699.9 321.36L699.1 322.1L698.3 321.64L697.5 322.07L696.7 321.59L695.9 321.6L695.1 321.12L694.3 321.64L693.5 322.9L692.7 322.61L691.9 321.88L691.1 323.06L690.3 322.35L689.5 321.39L688.7 322.27L687.9 321.61L687.1 321.37L686.3 322.78L685.5 321.5L684.7 322.35L683.9 322.67L683.1 322.99L682.3 321.43L681.5 321.72L680.7 322.2L679.9 323.3L679.1 322.56L678.3 322.78L677.5 323.02L676.7 321.84L675.9 322.85L675.1 321.83L674.3 322.05L673.5 322.39L672.7 322.17L671.9 322.66L671.1 322.59L670.3 322.29L669.5 322.36L668.7 322.96L667.9 323.41L667.1 323.64L666.3 323.65L665.5 324.41L664.7 323.58L663.9 323.29L663.1 325.62L662.3 326.27L661.5 326.33L660.7 328.63L659.9 330.31L659.1 330.66L658.3 334.31L657.5 338.49L656.7 341.56L655.9 348.17ZM711.23 312L710.91 298.9L711.05 293.42L712.07 288.06L712.46 282.82L713.76 277.7L713.98 272.69L715.06 267.79L715.18 263L716.3 258.32L716.57 253.74L717.23 249.26L718.29 244.88L719.26 240.6L719.74 236.41L720.54 232.32L721.17 228.32L721.67 224.4L722.04 220.58L723.03 216.83L723.47 213.17L724.39 209.6L724.94 206.1L725.72 202.68L726.18 199.33L727.21 196.06L727.68 192.86L728.4 189.73L728.79 186.68L729.74 183.69L730.46 180.76L731.42 177.9L731.8 175.11L732.17 172.37L732.95 169.7L733.64 167.09L734.56 164.53L735.39 162.03L736.08 159.59L736.72 157.2L737.36 154.86L737.98 152.58L738.69 150.35L738.71 148.16L739.69 146.03L740.42 143.94L741.14 141.9L741.75 139.9L742.4 137.95L743.28 136.04L743.34 134.17L744.29 132.35L745.25 130.56L745.25 128.82L745.96 127.11L747.14 125.44L747.85 123.81L747.84 122.21L748.49 120.65L749.7 119.13L750.24 117.64L750.77 116.18L751.45 114.75L752.22 113.36L752.9 112L752.97 110.66L753.66 109.36L754.81 108.08L755.57 106.84L756.11 105.62L756.45 104.43L757.04 103.26L757.68 102.12L758.08 101.01L759.25 99.92L759.53 98.85L760.39 97.81L760.98 96.79L761.47 95.8L762.34 94.82L762.82 93.87L763.29 92.94L764.38 92.03L764.51 91.14L765.12 90.27L765.82 89.42L766.6 88.58L767.44 87.77L767.93 86.97L767.93 97.81L767.19 98.85L766.58 99.92L765.68 101.01L764.9 102.12L764.13 103.26L763.08 104.43L762.36 105.62L761.68 106.84L760.74 108.08L760.19 109.36L759.32 110.66L758.48 112L758.33 113.36L757.1 114.75L756.24 116.18L755.66 117.64L754.96 119.13L754.56 120.65L753.65 122.21L753 123.81L752.11 125.44L750.98 127.11L750.27 128.82L750.04 130.56L749.13 132.35L747.98 134.17L747.79 136.04L746.63 137.95L746.3 139.9L745.57 141.9L744.77 143.94L743.55 146.03L742.77 148.16L742.57 150.35L741.23 152.58L740.71 154.86L740.05 157.2L738.98 159.59L738.8 162.03L737.82 164.53L737.27 167.09L736.44 169.7L735.49 172.37L734.82 175.11L734.37 177.9L733.32 180.76L732.9 183.69L732.18 186.68L730.99 189.73L730.44 192.86L730.13 196.06L729.35 199.33L728.24 202.68L727.52 206.1L727.23 209.6L726.11 213.17L725.25 216.83L724.55 220.58L724.19 224.4L722.99 228.32L722.59 232.32L722.05 236.41L721.26 240.6L720.58 244.88L719.59 249.26L718.85 253.74L718.09 258.32L717.35 263L717.12 267.79L715.98 272.69L715.46 277.7L714.57 282.82L714.14 288.06L713.15 293.42L712.51 298.9L712.63 312ZM771.93 295.79L772.73 296.83L773.53 299.11L774.33 302.13L775.13 301.94L775.93 303.96L776.73 305.39L777.53 305.47L778.33 306.93L779.13 306.09L779.93 308.19L780.73 308.1L781.53 306.91L782.33 307.42L783.13 307.71L783.93 307.91L784.73 308.65L785.53 308.7L786.33 307.86L787.13 308.01L787.93 309.3L788.73 309.07L789.53 308.8L790.33 310.04L791.13 309.11L791.93 309.25L792.73 310.24L793.53 310.32L794.33 310.24L795.13 309.49L795.93 309.06L796.73 310L797.53 309.74L798.33 310.53L799.13 308.77L799.93 309.32L800.73 309.66L801.53 309.72L802.33 308.67L803.13 309.26L803.93 310.04L804.73 308.93L805.53 309.77L806.33 310.82L807.13 309.74L807.93 310.51L808.73 310.6L809.53 309.41L810.33 309.96L811.13 310.09L811.93 309.98L812.73 309.58L813.53 310.05L814.33 309.43L815.13 310.79L815.93 311.12L816.73 310.52L817.53 310.6L818.33 310.81L819.13 310.87L819.93 309.69L820.73 309.25L821.53 309.94L822.33 310.53L823.13 311.23L823.93 309.43L824.73 309.55L825.53 311.17L826.33 309.75L827.13 310.98L827.13 322.97L826.33 322.37L825.53 321.58L824.73 322.99L823.93 322.34L823.13 322.3L822.33 322.87L821.53 322.63L820.73 322.05L819.93 322.91L819.13 321.63L818.33 321.37L817.53 322.71L816.73 322.69L815.93 322.95L815.13 322.72L814.33 321.5L813.53 321.77L812.73 322.83L811.93 322.08L811.13 323.06L810.33 321.98L809.53 322.99L808.73 322.78L807.93 321.6L807.13 321.3L806.33 321.72L805.53 322.49L804.73 322.19L803.93 322.13L803.13 322.37L802.33 322.22L801.53 321.98L800.73 323.13L799.93 322.38L799.13 322.65L798.33 321.82L797.53 321.56L796.73 321.73L795.93 321.61L795.13 323.33L794.33 321.62L793.53 323.08L792.73 321.79L791.93 322.02L791.13 322.47L790.33 322.58L789.53 322.13L788.73 322.73L787.93 322.23L787.13 322.05L786.33 322.2L785.53 322.02L784.73 323.1L783.93 323.53L783.13 322.04L782.33 323.75L781.53 322.8L780.73 323.63L779.93 323.27L779.13 325.76L778.33 325.49L777.53 326.73L776.73 328.74L775.93 328.93L775.13 331.11L774.33 334.21L773.53 338.33L772.73 341.57L771.93 347.67ZM827.26 312L826.75 298.9L827.1 293.42L828.21 288.06L828.44 282.82L829.7 277.7L830.33 272.69L831.03 267.79L831.78 263L832.26 258.32L833.21 253.74L833.68 249.26L834.27 244.88L834.88 240.6L835.54 236.41L835.99 232.32L836.77 228.32L837.89 224.4L838.18 220.58L839.15 216.83L839.92 213.17L840.54 209.6L841.09 206.1L841.62 202.68L842.27 199.33L842.88 196.06L843.88 192.86L844.57 189.73L845.42 186.68L845.67 183.69L846.75 180.76L847.41 177.9L847.64 175.11L848.77 172.37L849.2 169.7L850.11 167.09L850.64 164.53L850.99 162.03L851.62 159.59L852.45 157.2L853.09 154.86L853.43 152.58L854.67 150.35L855.1 148.16L855.71 146.03L856.56 143.94L856.87 141.9L857.49 139.9L858.41 137.95L858.82 136.04L859.54 134.17L860.01 132.35L860.65 130.56L861.51 128.82L862.28 127.11L863.22 125.44L863.65 123.81L864.14 122.21L864.78 120.65L865.31 119.13L866.12 117.64L867.1 116.18L867.16 114.75L868.02 113.36L868.84 112L869.54 110.66L870.03 109.36L870.73 108.08L871.58 106.84L872.19 105.62L872.37 104.43L873.21 103.26L874.17 102.12L874.47 101.01L874.87 99.92L875.91 98.85L876.05 97.81L876.74 96.79L877.66 95.8L878.09 94.82L879.03 93.87L879.67 92.94L880.01 92.03L880.95 91.14L881.5 90.27L882.17 89.42L882.62 88.58L883.22 87.77L883.96 86.97L883.96 97.81L883.53 98.85L882.46 99.92L881.86 101.01L880.71 102.12L880.24 103.26L879.33 104.43L878.73 105.62L877.96 106.84L877.4 108.08L876.48 109.36L875.43 110.66L874.98 112L874.17 113.36L873.22 114.75L872.74 116.18L872.11 117.64L871.3 119.13L870.18 120.65L869.49 122.21L869.03 123.81L867.99 125.44L867.23 127.11L866.7 128.82L865.62 130.56L864.95 132.35L864.35 134.17L863.39 136.04L862.74 137.95L861.98 139.9L861.18 141.9L860.5 143.94L859.94 146.03L859.25 148.16L858.14 150.35L857.84 152.58L856.75 154.86L856.02 157.2L855.35 159.59L854.86 162.03L853.68 164.53L853 167.09L852.13 169.7L852 172.37L850.8 175.11L850.26 177.9L849.46 180.76L848.98 183.69L848.32 186.68L847 189.73L846.53 192.86L845.74 196.06L844.8 199.33L844.03 202.68L843.63 206.1L842.61 209.6L841.94 213.17L841.62 216.83L840.44 220.58L840.11 224.4L839.44 228.32L838.7 232.32L837.81 236.41L837.33 240.6L836.5 244.88L835.68 249.26L834.76 253.74L834.27 258.32L833.74 263L832.73 267.79L831.88 272.69L831.16 277.7L831.04 282.82L830.38 288.06L829.34 293.42L828.38 298.9L828.66 312ZM887.96 294.52L888.76 296.4L889.56 300.07L890.36 301.47L891.16 302.44L891.96 303.18L892.76 303.85L893.56 306.23L894.36 305.98L895.16 307.19L895.96 307.7L896.76 307.03L897.56 307.98L898.36 309.13L899.16 308.91L899.96 308.97L900.76 308.17L901.56 308.83L902.36 308.18L903.16 309.8L903.96 308.61L904.76 308.95L905.56 309.41L906.36 309.3L907.16 309.43L907.96 309.02L908.76 308.48L909.56 309.81L910.36 310.13L911.16 309L911.96 309.58L912.76 309.27L913.56 308.82L914.36 310.37L915.16 309.09L915.96 308.84L916.76 310.28L917.56 309.2L918.36 310.13L919.16 310.41L919.96 309.16L920.76 310.21L921.56 310.61L922.36 309.78L923.16 309.74L923.96 310.03L924.76 310.93L925.56 309.35L926.36 309.22L927.16 309.64L927.96 309.85L928.76 310.89L929.56 309.35L930.36 310.5L931.16 310.89L931.96 309.54L932.76 309.57L933.56 309.21L934.36 309.26L935.16 310.3L935.96 309.38L936.76 309.94L937.56 310.48L938.36 309.38L939.16 309.31L939.96 309.66L940.76 310.72L941.56 310.02L942.36 309.97L943.16 310.13L943.16 321.66L942.36 322.09L941.56 321.9L940.76 322.39L939.96 321.51L939.16 322.41L938.36 321.17L937.56 322.78L936.76 323.04L935.96 321.08L935.16 322.22L934.36 322.77L933.56 322.47L932.76 322.53L931.96 321.79L931.16 322.87L930.36 321.5L929.56 321.8L928.76 322.48L927.96 322.81L927.16 322L926.36 323.11L925.56 322.4L924.76 321.57L923.96 322.39L923.16 322.83L922.36 321.79L921.56 321.6L920.76 321.86L919.96 322.63L919.16 322.97L918.36 321.23L917.56 322.21L916.76 322.74L915.96 321.38L915.16 321.58L914.36 323.18L913.56 321.88L912.76 322.62L911.96 321.3L911.16 322.01L910.36 322.07L909.56 322.74L908.76 321.93L907.96 322.91L907.16 323.34L906.36 323.44L905.56 322.35L904.76 321.72L903.96 323.15L903.16 322.89L902.36 322.87L901.56 322.67L900.76 322.92L899.96 323.84L899.16 322.68L898.36 322.49L897.56 323.6L896.76 324.27L895.96 324.44L895.16 325.38L894.36 325.75L893.56 327.22L892.76 327.92L891.96 330.23L891.16 332.5L890.36 333.62L889.56 337.28L888.76 342.28L887.96 348.99ZM943.29 312L942.51 298.9L943.24 293.42L943.92 288.06L944.44 282.82L945.34 277.7L946.23 272.69L946.7 267.79L947.28 263L948.48 258.32L948.91 253.74L949.62 249.26L950.17 244.88L951.26 240.6L951.85 236.41L952.44 232.32L953.15 228.32L953.85 224.4L954.4 220.58L955.01 216.83L955.68 213.17L956.43 209.6L957.08 206.1L957.8 202.68L958.48 199.33L959.33 196.06L960.08 192.86L960.28 189.73L960.81 186.68L961.67 183.69L962.16 180.76L963.36 177.9L963.9 175.11L964.33 172.37L964.93 169.7L966.07 167.09L966.71 164.53L967.27 162.03L967.94 159.59L968.64 157.2L969.09 154.86L969.71 152.58L970.48 150.35L971.37 148.16L972.1 146.03L972.71 143.94L973.31 141.9L973.43 139.9L974.2 137.95L975.36 136.04L975.72 134.17L976.35 132.35L976.86 130.56L977.89 128.82L978.3 127.11L979.28 125.44L979.29 123.81L980.58 122.21L980.54 120.65L981.28 119.13L982.09 117.64L982.91 116.18L983.18 114.75L984.14 113.36L985.05 112L985.34 110.66L986.21 109.36L986.73 108.08L987.36 106.84L987.71 105.62L988.55 104.43L989.49 103.26L989.97 102.12L990.29 101.01L991.08 99.92L991.78 98.85L992.27 97.81L993.07 96.79L993.74 95.8L993.94 94.82L994.71 93.87L995.65 92.94L995.97 92.03L996.5 91.14L997.61 90.27L997.93 89.42L999 88.58L999.34 87.77L999.99 86.97L999.99 97.81L999.4 98.85L998.55 99.92L997.94 101.01L996.91 102.12L995.95 103.26L995.08 104.43L994.9 105.62L993.58 106.84L993.28 108.08L992.14 109.36L991.42 110.66L990.88 112L990.27 113.36L989.32 114.75L988.57 116.18L987.59 117.64L987.35 119.13L986.37 120.65L985.3 122.21L984.68 123.81L983.95 125.44L983.63 127.11L982.21 128.82L981.47 130.56L981.06 132.35L980.21 134.17L979.54 136.04L978.49 137.95L978.05 139.9L977.46 141.9L976.48 143.94L975.91 146.03L975.2 148.16L974.67 150.35L973.73 152.58L973.1 154.86L971.97 157.2L971.19 159.59L970.42 162.03L969.6 164.53L969.29 167.09L968.72 169.7L967.54 172.37L966.78 175.11L966.56 177.9L965.49 180.76L964.55 183.69L964.19 186.68L963.13 189.73L962.8 192.86L961.77 196.06L961.17 199.33L960.08 202.68L959.98 206.1L959.03 209.6L958.32 213.17L957.28 216.83L957.01 220.58L955.9 224.4L955.22 228.32L954.95 232.32L953.89 236.41L952.96 240.6L952.15 244.88L951.56 249.26L950.8 253.74L950.55 258.32L949.3 263L948.61 267.79L948.39 272.69L947.66 277.7L947.02 282.82L945.93 288.06L945.49 293.42L944.41 298.9L944.69 312ZM1003.99 295.4L1004.79 296.47L1005.59 298.77L1006.39 300.26L1007.19 303.44L1007.99 302.95L1008.79 305.5L1009.59 306.43L1010.39 305.39L1011.19 306.09L1011.99 306.56L1012.79 306.85L1013.59 307.93L1014.39 307.37L1015.19 308.34L1015.99 308.44L1016.79 308.89L1017.59 308.43L1018.39 309.7L1019.19 308.75L1019.99 309.98L1020.79 308.88L1021.59 308.91L1022.39 310.09L1023.19 308.83L1023.99 309.86L1024.79 309.79L1025.59 308.75L1026.39 310.18L1027.19 308.66L1027.99 310.01L1028.79 309.24L1029.59 310.53L1030.39 309.75L1031.19 310.66L1031.99 309.97L1032.79 308.92L1033.59 309.83L1034.39 310.31L1035.19 310.01L1035.99 309.39L1036.79 309.14L1037.59 310.56L1038.39 309.34L1039.19 310.27L1039.99 310.61L1040.79 310.02L1041.59 308.88L1042.39 308.91L1043.19 309.5L1043.99 310.29L1044.79 310.47L1045.59 310.01L1046.39 310.82L1047.19 309.92L1047.99 309.9L1048.79 310.64L1049.59 310.55L1050.39 310.78L1051.19 309.58L1051.99 309.52L1052.79 310.07L1053.59 310.76L1054.39 310.66L1055.19 309.39L1055.99 309.37L1056.79 311.05L1057.59 310.49L1058.39 310.14L1059.19 310.73L1059.19 320.96L1058.39 321.15L1057.59 322.72L1056.79 322.37L1055.99 321.9L1055.19 321.16L1054.39 322.99L1053.59 322.17L1052.79 321.36L1051.99 321.06L1051.19 322.29L1050.39 323.03L1049.59 321.33L1048.79 321.99L1047.99 321.68L1047.19 321.7L1046.39 323.01L1045.59 322.57L1044.79 321.55L1043.99 321.21L1043.19 323.16L1042.39 321.78L1041.59 321.1L1040.79 321.82L1039.99 321.53L1039.19 321.52L1038.39 321.9L1037.59 323.21L1036.79 322.09L1035.99 322.43L1035.19 321.75L1034.39 321.3L1033.59 321.46L1032.79 322.04L1031.99 323.22L1031.19 322.97L1030.39 323.09L1029.59 323.12L1028.79 322.51L1027.99 323.07L1027.19 323.32L1026.39 322.88L1025.59 322.11L1024.79 323.24L1023.99 322.96L1023.19 321.95L1022.39 321.44L1021.59 322.87L1020.79 322.9L1019.99 321.73L1019.19 322.64L1018.39 322.79L1017.59 321.65L1016.79 322.13L1015.99 321.93L1015.19 322.82L1014.39 323.39L1013.59 323.25L1012.79 323.14L1011.99 324.57L1011.19 324.02L1010.39 325.11L1009.59 325.54L1008.79 327.96L1007.99 328.41L1007.19 331.21L1006.39 333.22L1005.59 337.08L1004.79 343.14L1003.99 349.02Z"/>
  </g>
  <g fill="none"><path d="M-44.18 87.97L-40.48 405" stroke-width="1.9" stroke="#0a2480"/><path d="M-40.48 404L-40.18 431" stroke-width="1.5" stroke="#1a3cc0"/><path d="M-39.58 274L-38.98 352" stroke-width="1.5" stroke="#0a2ea8"/><path d="M71.85 87.97L75.55 405" stroke-width="1.9" stroke="#0a2480"/><path d="M75.55 404L75.85 431" stroke-width="1.5" stroke="#1a3cc0"/><path d="M76.45 274L77.05 352" stroke-width="1.5" stroke="#0a2ea8"/><path d="M187.88 87.97L191.58 405" stroke-width="1.9" stroke="#0a2480"/><path d="M191.58 404L191.88 431" stroke-width="1.5" stroke="#1a3cc0"/><path d="M192.48 274L193.08 352" stroke-width="1.5" stroke="#0a2ea8"/><path d="M303.91 87.97L307.61 405" stroke-width="1.9" stroke="#0a2480"/><path d="M307.61 404L307.91 431" stroke-width="1.5" stroke="#1a3cc0"/><path d="M308.51 274L309.11 352" stroke-width="1.5" stroke="#0a2ea8"/><path d="M419.94 87.97L423.64 405" stroke-width="1.9" stroke="#0a2480"/><path d="M423.64 404L423.94 431" stroke-width="1.5" stroke="#1a3cc0"/><path d="M424.54 274L425.14 352" stroke-width="1.5" stroke="#0a2ea8"/><path d="M535.97 87.97L539.67 405" stroke-width="1.9" stroke="#0a2480"/><path d="M539.67 404L539.97 431" stroke-width="1.5" stroke="#1a3cc0"/><path d="M540.57 274L541.17 352" stroke-width="1.5" stroke="#0a2ea8"/><path d="M652 87.97L655.7 405" stroke-width="1.9" stroke="#0a2480"/><path d="M655.7 404L656 431" stroke-width="1.5" stroke="#1a3cc0"/><path d="M656.6 274L657.2 352" stroke-width="1.5" stroke="#0a2ea8"/><path d="M768.03 87.97L771.73 405" stroke-width="1.9" stroke="#0a2480"/><path d="M771.73 404L772.03 431" stroke-width="1.5" stroke="#1a3cc0"/><path d="M772.63 274L773.23 352" stroke-width="1.5" stroke="#0a2ea8"/><path d="M884.06 87.97L887.76 405" stroke-width="1.9" stroke="#0a2480"/><path d="M887.76 404L888.06 431" stroke-width="1.5" stroke="#1a3cc0"/><path d="M888.66 274L889.26 352" stroke-width="1.5" stroke="#0a2ea8"/><path d="M1000.09 87.97L1003.79 405" stroke-width="1.9" stroke="#0a2480"/><path d="M1003.79 404L1004.09 431" stroke-width="1.5" stroke="#1a3cc0"/><path d="M1004.69 274L1005.29 352" stroke-width="1.5" stroke="#0a2ea8"/></g>
  </g>
  <!-- cursors -->
  <g stroke="#f8673a" fill="none" stroke-width="1.7">
    <path d="M24 88H964"/>
    <path d="M2.4 74.2H944.4" stroke-dasharray="13.8 3.29"/>
    <path d="M2 269.6H962" stroke-dasharray="7.3 2.3"/>
    <path d="M474 62V575"/>
    <path d="M515.3 46V559" stroke-dasharray="13 3.5" stroke-width="1.6"/>
  </g>
  <path d="M478 45H488L483 50Z" fill="#ff4a14"/>
  <path d="M478 575H488L483 570.5Z" fill="#ff4a14"/>
  <path d="M459.5 301.5H471L465.2 312.5Z" fill="#ff4a14"/>
  <g fill="none" stroke="#f8603a" stroke-width="1.25">
    <path d="M4.5 95.7L6 92.5L6.7 87.3L8.5 85.2L10.3 87.3L11 92.5L12.5 95.7M6 92.6H11M14 87.5L17.5 91.3L21.3 87.5M17.5 91.3V95.7"/>
    <path d="M946 70.6V81.8M946 70.6H951.5L952.7 71.8V73.4L951.5 74.4H946M951.5 74.4L953.8 76V80.3L952.3 81.8H946M955.5 73.2L959 77.3L962.5 73.2M959 77.3V81.8"/>
    <path d="M468.3 60.3L469.8 57L470.4 51.8L472.3 50L474.1 51.8L474.7 57L476.2 60.3M469.8 57H474.7M477.5 52.5L485 60.8M485 52.5L477.5 60.8"/>
    <path d="M510.3 561.1V572.3M510.3 561.1H515.4M515.4 557.5V561.1M515.4 561.1L516.7 562.3V564.4L515.5 565.4H510.3M515.5 565.4L517.8 567V570.8L516.3 572.3H510.3M519.3 564.5L526.5 572.5M526.5 564.5L519.3 572.5"/>
  </g>

  <g fill="#1040e0">
    <path d="M967.8 269.8L973.3 265V268.7H978.6V270.9H973.3V274.6Z"/>
    <path d="M967.8 310.1L973.3 305.3V309.6H977.2V319.4H978.7V309.6H978.4V311.8H973.3V314.9Z"/>
  </g>
  <path d="M977.9 309.6V319.5M974.6 320H981.5M975.5 322H980.5M976.5 324H979.5" stroke="#1040e0" stroke-width="1.4" fill="none"/>
  <path d="M987.8 263.5H993.8M990.8 263.5V272.7" stroke="#1040e0" stroke-width="1.8" fill="none"/>
  <text x="980.3" y="317.3" font-family="Liberation Sans" font-size="12.6" font-weight="bold" fill="#1040e0">3</text>
  <rect x="946" y="304" width="17" height="14" fill="#f6fbf6"/>
  <path d="M947.4 306.2H952M947.4 316.4H952M949.7 306.2V316.4M955 305.3V316.4H960.4" stroke="#3a4ee0" stroke-width="1.8" fill="none"/>
</svg>

<!-- bottom toolbar -->
<div class="tb" style="top:582px;height:41px"></div>
<div class="a" style="left:0;top:586px;width:14px;height:19px;background:#f2f1ee;border-top:1px solid #9a9a98"></div>
<div class="a" style="left:956px;top:586px;width:15px;height:19px;background:#f2f1ee"></div>
<div class="btn2" style="left:22px;top:585px;width:27px;height:13px"></div>
<div class="btn2" style="left:22px;top:601px;width:27px;height:13px"></div>
<div class="btn2" style="left:52px;top:585px;width:20px;height:29px"></div>
<div class="btn3" style="left:91px;top:585px;width:27px;height:29px"></div>
<div class="btn3" style="left:120px;top:585px;width:27px;height:29px;background:linear-gradient(#c2c2c0,#e6e8e6 25%,#fbfdfb 48%,#fbfdfb)"></div>
<div class="btn3" style="left:148px;top:585px;width:27px;height:29px"></div>
<div class="btn3" style="left:190px;top:585px;width:27px;height:29px"></div>
<div class="btn3" style="left:219px;top:585px;width:27px;height:29px"></div>
<div class="btn3" style="left:248px;top:585px;width:27px;height:29px"></div>
<div class="btn" style="left:290px;top:585px;width:26px;height:29px"></div>
<div class="inp" style="left:317px;top:583px;width:109px;height:36px;color:#1a1a38;padding:4.5px 0 0 7px;letter-spacing:0.3px">2.00 µs/</div>
<div class="btn3" style="left:428px;top:584px;width:20px;height:32px"></div>
<div class="btn3" style="left:450px;top:584px;width:20px;height:32px"></div>
<div class="a" style="left:476px;top:587px;width:14px;height:18px;background:#ff4000"></div>
<div class="inp" style="left:496px;top:583px;width:161px;height:36px;color:#1a1a38;padding:4.5px 0 0 7px;letter-spacing:0.3px">0.0 s</div>
<div class="btn3" style="left:658px;top:584px;width:20px;height:32px"></div>
<div class="btn3" style="left:681px;top:584px;width:20px;height:32px"></div>
<div class="btn3" style="left:703px;top:584px;width:20px;height:32px"></div>
<div class="btn" style="left:795px;top:585px;width:26px;height:29px"></div>
<div class="inp" style="left:823px;top:583px;width:96px;height:36px;color:#2f55e6;padding:4.5px 0 0 7px;letter-spacing:0.3px">310 mA</div>
<div class="btn2" style="left:919px;top:584px;width:27px;height:15px"></div>
<div class="btn2" style="left:919px;top:601px;width:27px;height:15px"></div>

<!-- tabs -->
<div class="a" style="left:0;top:623px;width:999px;height:25px;background:#ebe9e5"></div>
<div class="a" style="left:1px;top:623px;width:122px;height:25px;background:#303030;color:#f8f8f0;font-size:16.5px;line-height:27px;padding-left:7px">Measurements</div>
<div class="tab" style="left:123px;top:625px;height:23px;width:67.5px;padding-left:4px;border:2px solid #f04010;border-bottom:none;line-height:19px">Markers</div>
<div class="tab" style="left:192px;width:61px;padding-left:8px">Status</div>
<div class="tab" style="left:253px;width:59px;padding-left:6px">Scales</div>

<!-- measurements panel -->
<div class="a" style="left:0;top:648px;width:999px;height:98px;background:#303030;border-top:1px solid #222"></div>
<div class="a" style="left:0;top:746px;width:999px;height:4px;background:#f4f4f2"></div>
<div class="a" style="left:0;top:750px;width:999px;height:2px;background:#333"></div>
<div class="a" style="left:0;top:649px;width:18px;height:98px;background:#ebe9e5"></div>
<div class="a" style="left:0;top:649px;width:18px;height:23px;background:linear-gradient(#f6f6f4,#ecebe8 50%,#cfcfcd);border-right:1px solid #d8d8d6"></div>
<div class="a" style="left:0;top:672px;width:18px;height:10px;background:linear-gradient(90deg,#e4e4e2,#f4f4f2 50%,#d4d4d2);border-top:1px solid #b8b8b6;border-bottom:2px solid #b0b0ae"></div>
<div class="a" style="left:0;top:725px;width:18px;height:22px;background:linear-gradient(#f6f6f4,#ecebe8 50%,#cfcfcd);border-top:1px solid #d8d8d6"></div>
<div class="meas">           V avg(<span class="b3">3</span>)        ACVrms(<span class="b3">3</span>)       V max(<span class="b3">3</span>)
Current   507.674 mA      643.020 mA      1.69308 A
   Mean   506.109 mA      642.526 mA      1.68448 A
    Min   502.859 mA      640.792 mA      1.66677 A
    Max   508.968 mA      644.097 mA      1.71814 A</div>

<!-- icon overlay -->
<svg class="a" style="left:0;top:0" width="1001" height="752">
  <!-- channel digits -->
  <path d="M16.2 15.4L20.2 12.3V26.6" stroke="#ff8c00" stroke-width="2.4" fill="none" stroke-linejoin="round"/>
  <text x="247.2" y="26.6" font-family="Liberation Sans" font-size="20.5" fill="#10f010" stroke="#10f010" stroke-width="0.35" text-anchor="middle">2</text>
  <text x="476" y="26.3" font-family="Liberation Sans" font-size="20" fill="#1038e8" stroke="#1038e8" stroke-width="0.2" text-anchor="middle">3</text>
  <text x="705.6" y="27" font-family="Liberation Sans" font-size="20" font-weight="bold" fill="#ff00c8" text-anchor="middle">4</text>
  <!-- checkmark -->
  <path d="M502.3 26.3L504.7 29.2L509.3 23.8" stroke="#222" stroke-width="2.3" fill="none"/>
  <!-- wave icons top -->
  <path d="M657.5 11.2C657.5 7 659 5.3 660.7 5.3S663.2 8 664.2 10.5S666 15.5 667.5 15.5S670.5 12.5 670.5 10" stroke="#151515" stroke-width="1.6" fill="none"/>
  <path d="M658.2 28.8C659.5 26.5 661 25.5 662.3 25.5C664 25.5 665.5 29.5 667.3 29.5C668.8 29.5 670 28 670.8 26.7" stroke="#151515" stroke-width="1.6" fill="none"/>
  <!-- bottom left arrow -->
  <path d="M7 590V602.5" stroke="#111" stroke-width="1.4"/><path d="M3.6 593.6L7 589.5L10.4 593.6Z" fill="#111"/>
  <g stroke="#3a3a3a" stroke-width="1.3" fill="none">
    <path d="M31.9 592.2L35.8 588.6L39.7 592.2M31.9 594.6L35.8 591L39.7 594.6"/>
    <path d="M31.9 604.6L35.8 608.2L39.7 604.6M31.9 607L35.8 610.6L39.7 607"/>
    <path d="M57.5 592.2L61.4 588.6L65.3 592.2M57.5 594.6L61.4 591L65.3 594.6"/>
    <path d="M57.5 604.6L61.4 608.2L65.3 604.6M57.5 607L61.4 610.6L65.3 607"/>
  </g>
  <!-- octagons -->
  <path d="M99.5 591.5H107.5L111.5 595.5V603.5L107.5 607.5H99.5L95.5 603.5V595.5Z" fill="#00b0b0" stroke="#0a0a0a" stroke-width="1.5"/>
  <path d="M129.5 592.5H137.5L141.5 596.5V604.3L137.5 608.3H129.5L125.5 604.3V596.5Z" fill="#ff0000" stroke="#0a0a0a" stroke-width="1.5"/>
  <path d="M157.5 591.5H165.5L169.5 595.5V603.5L165.5 607.5H157.5L153.5 603.5V595.5Z" fill="#ffff00" stroke="#0a0a0a" stroke-width="1.5"/>
  <!-- resize icon -->
  <rect x="192.8" y="590.3" width="20.5" height="18" rx="1.5" fill="#fbfdfb" stroke="#151515" stroke-width="1.6"/>
  <path d="M213 598.6V607.6H203.6Z" fill="#7c7c7c"/>
  <path d="M213 598.6L203.6 607.6" stroke="#1a1a1a" stroke-width="0.9"/>
  <path d="M194.4 596.6C196.5 593.2 201.8 593.2 204.4 597.2" stroke="#1a1a1a" stroke-width="1.2" fill="none" stroke-dasharray="2 0.6"/>
  <path d="M202.8 600.2H208.3V594.9Z" fill="#111"/>
  <!-- printer -->
  <path d="M222.3 601.5L231.8 608.5L242.5 599.5V602L231.8 611L222.3 603.5Z" fill="#262626"/>
  <path d="M222.3 601.5L231.8 608.3L242.5 599.5L232.3 594.3Z" fill="#bdbdbd" stroke="#6a6a6a" stroke-width="0.6"/>
  <path d="M223.5 601.3L231.3 606.6L234.5 603.4L226.8 598.6Z" fill="#ececec"/>
  <path d="M232 596.3L235.5 591.8L242.5 594L238.3 598.8Z" fill="#ffffff" stroke="#8a8a8a" stroke-width="0.7"/>
  <path d="M236.8 598.5C237.8 595.8 239.8 594.4 242.6 594.6" stroke="#111" stroke-width="1.2" fill="none"/>
  <rect x="227.3" y="597.9" width="2.6" height="1.9" fill="#10d010"/><rect x="229.9" y="598.9" width="2.6" height="1.9" fill="#e01818"/>
  <!-- sun -->
  <path d="M258.8 595H263.2L265.8 597.6V602L263.2 604.5H258.8L256.2 602V597.6Z" fill="#ffff00" stroke="#1a1a2a" stroke-width="1.1"/>
  <g stroke="#333" stroke-width="1.5"><path d="M261 589.8V593.6M261 606V609.8M251 599.7H255.1M267 599.7H271.3M252.1 590.7L256.1 594.5M266 604.9L270 608.7M252.1 608.7L256.1 604.9M266 594.5L270 590.7"/></g>
  <!-- H -->
  <path d="M296.6 591.5V606M308.4 591.5V606M296.6 598.8H308.4" stroke="#000" stroke-width="2" fill="none"/>
  <!-- small wave btns -->
  <path d="M434.5 601C434.5 594.5 438 594.5 438 600S441.5 605.5 441.5 599.5" stroke="#111" stroke-width="1.3" fill="none"/>
  <path d="M453.5 601C455.5 596 458 596 460 600.5S464.5 605 466.5 600" stroke="#111" stroke-width="1.3" fill="none"/>
  <!-- trigger icon arrow -->
  <path d="M483 592V603" stroke="#111" stroke-width="1.5"/><path d="M480 595L483 590.5L486 595Z" fill="#111"/>
  <!-- nav arrows -->
  <path d="M664.5 600L671 594.5V605.5Z" fill="#111"/>
  <path d="M716.5 600L710 594.5V605.5Z" fill="#111"/>
  <path d="M690.7 594.5C688.5 594.5 687.8 597 687.8 600S688.5 605.5 690.7 605.5S693.6 603 693.6 600S692.9 594.5 690.7 594.5Z" stroke="#111" stroke-width="1.8" fill="none"/>
  <!-- T -->
  <path d="M801 593H814M807.6 593V607" stroke="#0a3ce6" stroke-width="2" fill="none"/>
  <!-- up/down -->
  <path d="M926 594L932.5 589L939 594Z" fill="#111"/>
  <path d="M926 606L932.5 611L939 606Z" fill="#111"/>
  <path d="M956.5 586.5H971M956.5 586.5V605" stroke="#9a9a9a" stroke-width="1.2" fill="none"/>
  <path d="M963.5 591V603" stroke="#111" stroke-width="1.4"/><path d="M960.5 594L963.5 590L966.5 594Z" fill="#111"/>
  <!-- scrollbar arrows -->
  <path d="M2.5 662.5L6.8 658.2L11.1 662.5M2.5 733L6.8 737.3L11.1 733" stroke="#3c4656" stroke-width="1.8" fill="none"/>
</svg>
</body></html>
